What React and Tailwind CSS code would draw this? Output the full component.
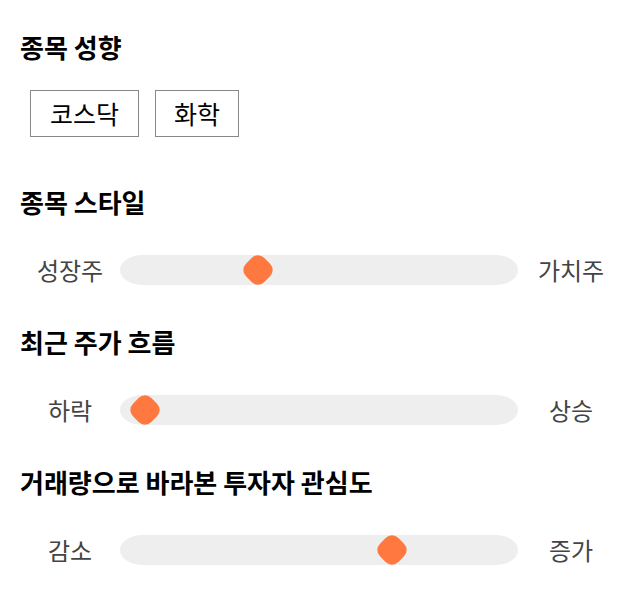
import React from "react";

const font = { fontFamily: '"Noto Sans CJK KR", "Noto Sans", sans-serif' };

function Slider({ left, right, pos }) {
  return (
    <div className="flex items-center h-[30px]">
      <div className="w-[100px] text-center text-[24px] text-[#444444] leading-none">{left}</div>
      <div className="relative flex-1 h-[30px] bg-[#eeeeee] rounded-[22px/15px]">
        <div
          className="absolute top-[2px] w-[26px] h-[26px] rotate-45 rounded-[9px] bg-[#ff7840]"
          style={{ left: pos }}
        />
      </div>
      <div className="w-[102px] pl-[4px] text-center text-[24px] text-[#444444] leading-none">{right}</div>
    </div>
  );
}

export default function App() {
  return (
    <div className="w-[640px] h-[606px] bg-white px-5 pt-[31px]" style={font}>
      <h2 className="text-[26px] font-bold leading-[32px] text-black">종목 성향</h2>
      <div className="flex gap-4 pl-[10px] mt-[27px]">
        <button className="h-[47px] px-[19px] border border-[#888888] text-[25px] leading-none text-black bg-white">코스닥</button>
        <button className="h-[47px] px-[18px] border border-[#888888] text-[25px] leading-none text-black bg-white">화학</button>
      </div>

      <h2 className="mt-[49px] text-[26px] font-bold leading-[32px] text-black">종목 스타일</h2>
      <div className="mt-[37px]">
        <Slider left="성장주" right="가치주" pos="125px" />
      </div>

      <h2 className="mt-[41px] text-[26px] font-bold leading-[32px] text-black">최근 주가 흐름</h2>
      <div className="mt-[37px]">
        <Slider left="하락" right="상승" pos="12px" />
      </div>

      <h2 className="mt-[41px] text-[26px] font-bold leading-[32px] text-black">거래량으로 바라본 투자자 관심도</h2>
      <div className="mt-[37px]">
        <Slider left="감소" right="증가" pos="259px" />
      </div>
    </div>
  );
}
